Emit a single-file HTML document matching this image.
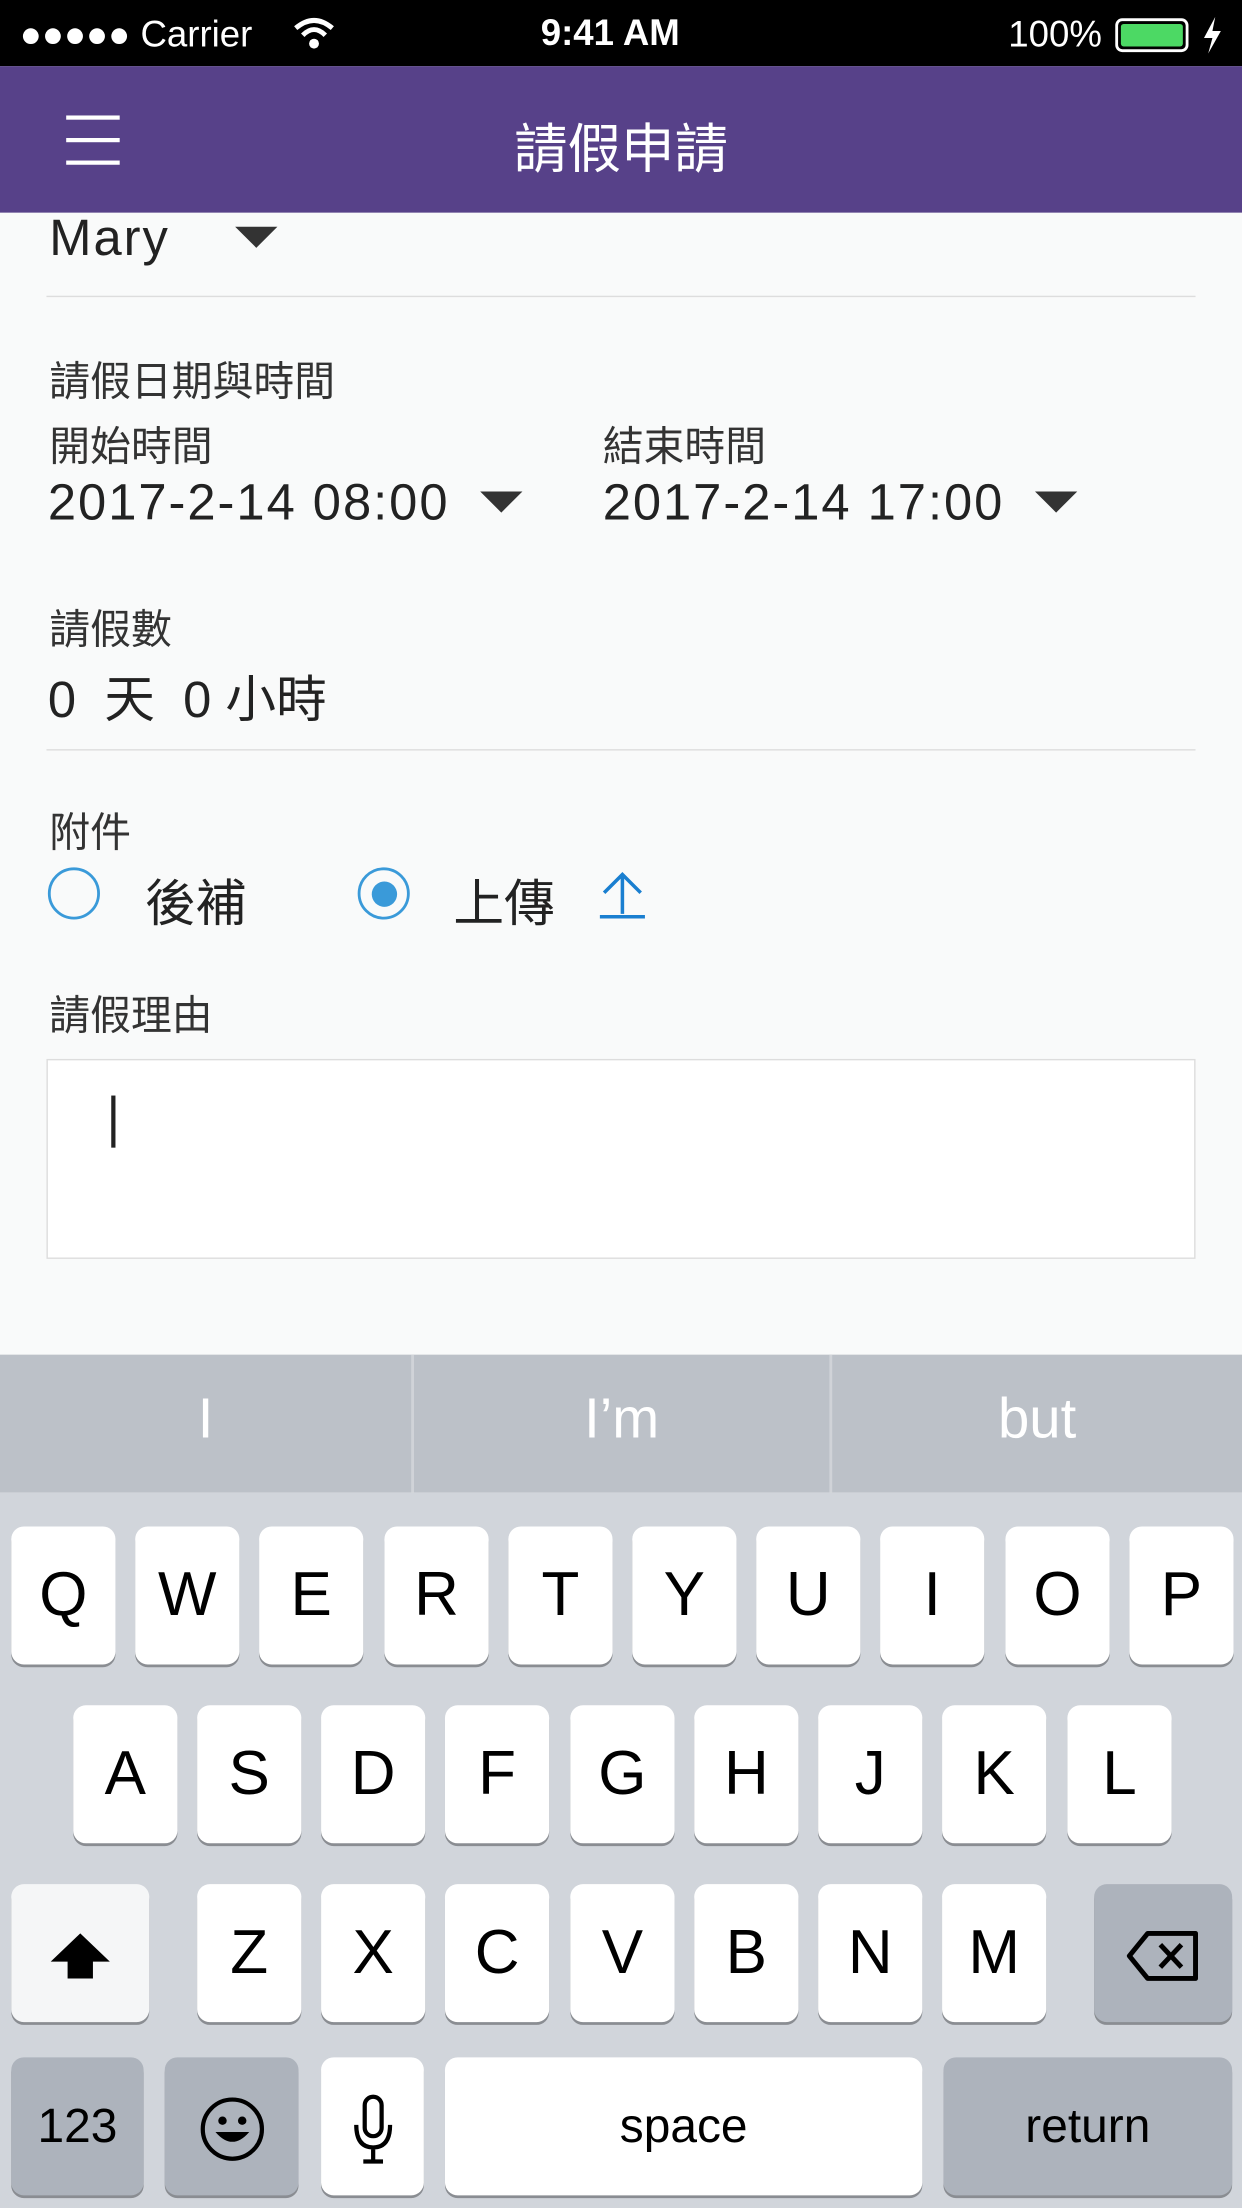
<!DOCTYPE html>
<html><head><meta charset="utf-8"><style>
*{margin:0;padding:0;box-sizing:border-box}
html,body{width:1242px;height:2208px;overflow:hidden;background:#f9fafa}
#w{position:absolute;left:0;top:0;width:882px;height:1568px;transform:scale(1.40816);transform-origin:0 0;font-family:"Liberation Sans","Noto Sans CJK TC",sans-serif;color:#222;background:#f9fafa}
.a{position:absolute;white-space:nowrap}
.t{font-size:29px;color:#333}
.v{font-size:36px;color:#222;letter-spacing:1.4px}
.tri{position:absolute;width:0;height:0;border-left:15px solid transparent;border-right:15px solid transparent;border-top:15px solid #333}
.k{position:absolute;background:#fff;border-radius:9px;box-shadow:0 2px 0 #8a8d92;font-size:44px;text-align:center;line-height:98px;height:98px;width:74px;color:#000}
.g{background:#adb3bc}
</style></head><body><div id="w">
<div class="a" style="left:0;top:0;width:882px;height:47px;background:#000;color:#fff;font-size:26px">
 <span class="a" style="left:14px;top:9px">●●●●● Carrier</span>
 <svg class="a" style="left:208px;top:11px" width="30" height="26" viewBox="0 0 30 26"><path d="M2 9 Q15 -2 28 9" stroke="#fff" stroke-width="3.5" fill="none"/><path d="M7 14 Q15 6 23 14" stroke="#fff" stroke-width="3.5" fill="none"/><circle cx="15" cy="20" r="3.5" fill="#fff"/></svg>
 <span class="a" style="left:384px;top:8px;font-weight:bold">9:41 AM</span>
 <span class="a" style="left:716px;top:9px">100%</span>
 <div class="a" style="left:792px;top:13px;width:52px;height:24px;border:2px solid #fff;border-radius:5px;padding:2px"><div style="width:100%;height:100%;background:#4cd964;border-radius:2px"></div></div>
 <svg class="a" style="left:853px;top:12px" width="16" height="26" viewBox="0 0 16 26"><path d="M10 0 L2 15 H8 L5 26 L14 10 H8 Z" fill="#fff"/></svg>
</div>
<div class="a" style="left:0;top:47px;width:882px;height:104px;background:#574189">
 <div class="a" style="left:47px;top:35px;width:38px;height:3px;background:#fff"></div>
 <div class="a" style="left:47px;top:51px;width:38px;height:3px;background:#fff"></div>
 <div class="a" style="left:47px;top:67px;width:38px;height:3px;background:#fff"></div>
 <div class="a" style="left:0;width:882px;top:28px;text-align:center;font-size:38px;color:#fff">請假申請</div>
</div>
<div class="a v" style="left:35px;top:148px">Mary</div>
<div class="tri" style="left:167px;top:161px"></div>
<div class="a" style="left:33px;top:210px;width:816px;height:1px;background:#ddd"></div>
<div class="a t" style="left:35px;top:248px">請假日期與時間</div>
<div class="a t" style="left:35px;top:294px">開始時間</div>
<div class="a t" style="left:428px;top:294px">結束時間</div>
<div class="a v" style="left:34px;top:336px">2017-2-14 08:00</div>
<div class="tri" style="left:341px;top:349px"></div>
<div class="a v" style="left:428px;top:336px">2017-2-14 17:00</div>
<div class="tri" style="left:735px;top:349px"></div>
<div class="a t" style="left:35px;top:424px">請假數</div>
<div class="a v" style="left:34px;top:468px;letter-spacing:0">0&nbsp;&nbsp;天&nbsp;&nbsp;0 小時</div>
<div class="a" style="left:33px;top:532px;width:816px;height:1px;background:#ddd"></div>
<div class="a t" style="left:35px;top:568px">附件</div>
<div class="a" style="left:34px;top:616px;width:37px;height:37px;border:2px solid #3a9ad9;border-radius:50%"></div>
<div class="a v" style="left:103px;top:613px;letter-spacing:0">後補</div>
<div class="a" style="left:254px;top:616px;width:37px;height:37px;border:2px solid #3a9ad9;border-radius:50%"><div style="position:absolute;left:7.5px;top:7.5px;width:18px;height:18px;border-radius:50%;background:#3a9ad9"></div></div>
<div class="a v" style="left:322px;top:613px;letter-spacing:0">上傳</div>
<svg class="a" style="left:424px;top:617px" width="36" height="36" viewBox="0 0 36 36"><path d="M18 32 V4 M5 17 L18 4 L31 17 M2 34 H34" stroke="#1a7fd0" stroke-width="2.5" fill="none"/></svg>
<div class="a t" style="left:35px;top:698px">請假理由</div>
<div class="a" style="left:33px;top:752px;width:816px;height:142px;background:#fff;border:1px solid #ddd"></div>
<div class="a" style="left:79px;top:778px;width:3px;height:37px;background:#222"></div>
<div class="a" style="left:0;top:962px;width:882px;height:98px;background:#bcc1c8;color:#fff;font-size:40px">
 <div class="a" style="left:292px;top:0;width:2px;height:98px;background:#d0d3d8"></div>
 <div class="a" style="left:589px;top:0;width:2px;height:98px;background:#d0d3d8"></div>
 <div class="a" style="left:0;width:292px;top:24px;text-align:center">I</div>
 <div class="a" style="left:294px;width:295px;top:24px;text-align:center">I’m</div>
 <div class="a" style="left:591px;width:291px;top:24px;text-align:center">but</div>
</div>
<div class="a" style="left:0;top:1060px;width:882px;height:508px;background:#d1d5db">
<div class="k" style="left:8px;top:24px">Q</div><div class="k" style="left:96px;top:24px">W</div><div class="k" style="left:184px;top:24px">E</div><div class="k" style="left:273px;top:24px">R</div><div class="k" style="left:361px;top:24px">T</div><div class="k" style="left:449px;top:24px">Y</div><div class="k" style="left:537px;top:24px">U</div><div class="k" style="left:625px;top:24px">I</div><div class="k" style="left:714px;top:24px">O</div><div class="k" style="left:802px;top:24px">P</div>
<div class="k" style="left:52px;top:151px">A</div><div class="k" style="left:140px;top:151px">S</div><div class="k" style="left:228px;top:151px">D</div><div class="k" style="left:316px;top:151px">F</div><div class="k" style="left:405px;top:151px">G</div><div class="k" style="left:493px;top:151px">H</div><div class="k" style="left:581px;top:151px">J</div><div class="k" style="left:669px;top:151px">K</div><div class="k" style="left:758px;top:151px">L</div>
<div class="k" style="left:8px;top:278px;width:98px;background:#f5f6f7"><svg width="46" height="40" viewBox="0 0 46 40" style="vertical-align:middle"><path d="M23 4 L44 24 H32 V36 H14 V24 H2 Z" fill="#000"/></svg></div>
<div class="k" style="left:140px;top:278px">Z</div><div class="k" style="left:228px;top:278px">X</div><div class="k" style="left:316px;top:278px">C</div><div class="k" style="left:405px;top:278px">V</div><div class="k" style="left:493px;top:278px">B</div><div class="k" style="left:581px;top:278px">N</div><div class="k" style="left:669px;top:278px">M</div>
<div class="k g" style="left:777px;top:278px;width:98px"><svg width="54" height="40" viewBox="0 0 54 40" style="vertical-align:middle"><path d="M16 4 H50 V36 H16 L3 20 Z" fill="none" stroke="#000" stroke-width="3.5" stroke-linejoin="round"/><path d="M25 12 L40 28 M40 12 L25 28" stroke="#000" stroke-width="3.5"/></svg></div>
<div class="k g" style="left:8px;top:401px;width:94px;font-size:34px">123</div>
<div class="k g" style="left:117px;top:401px;width:95px"><svg width="48" height="48" viewBox="0 0 48 48" style="vertical-align:middle"><circle cx="24" cy="24" r="21" fill="none" stroke="#000" stroke-width="3"/><circle cx="17" cy="18" r="3" fill="#000"/><circle cx="31" cy="18" r="3" fill="#000"/><path d="M12 26 Q24 40 36 26 Z" fill="#000"/></svg></div>
<div class="k" style="left:228px;top:401px;width:73px"><svg width="30" height="50" viewBox="0 0 30 50" style="vertical-align:middle"><rect x="9" y="2" width="12" height="28" rx="6" fill="none" stroke="#000" stroke-width="3"/><path d="M3 22 Q3 38 15 38 Q27 38 27 22 M15 38 V48 M8 48 H22" fill="none" stroke="#000" stroke-width="3"/></svg></div>
<div class="k" style="left:316px;top:401px;width:339px;font-size:34px">space</div>
<div class="k g" style="left:670px;top:401px;width:205px;font-size:34px">return</div>
</div>
</div></body></html>
